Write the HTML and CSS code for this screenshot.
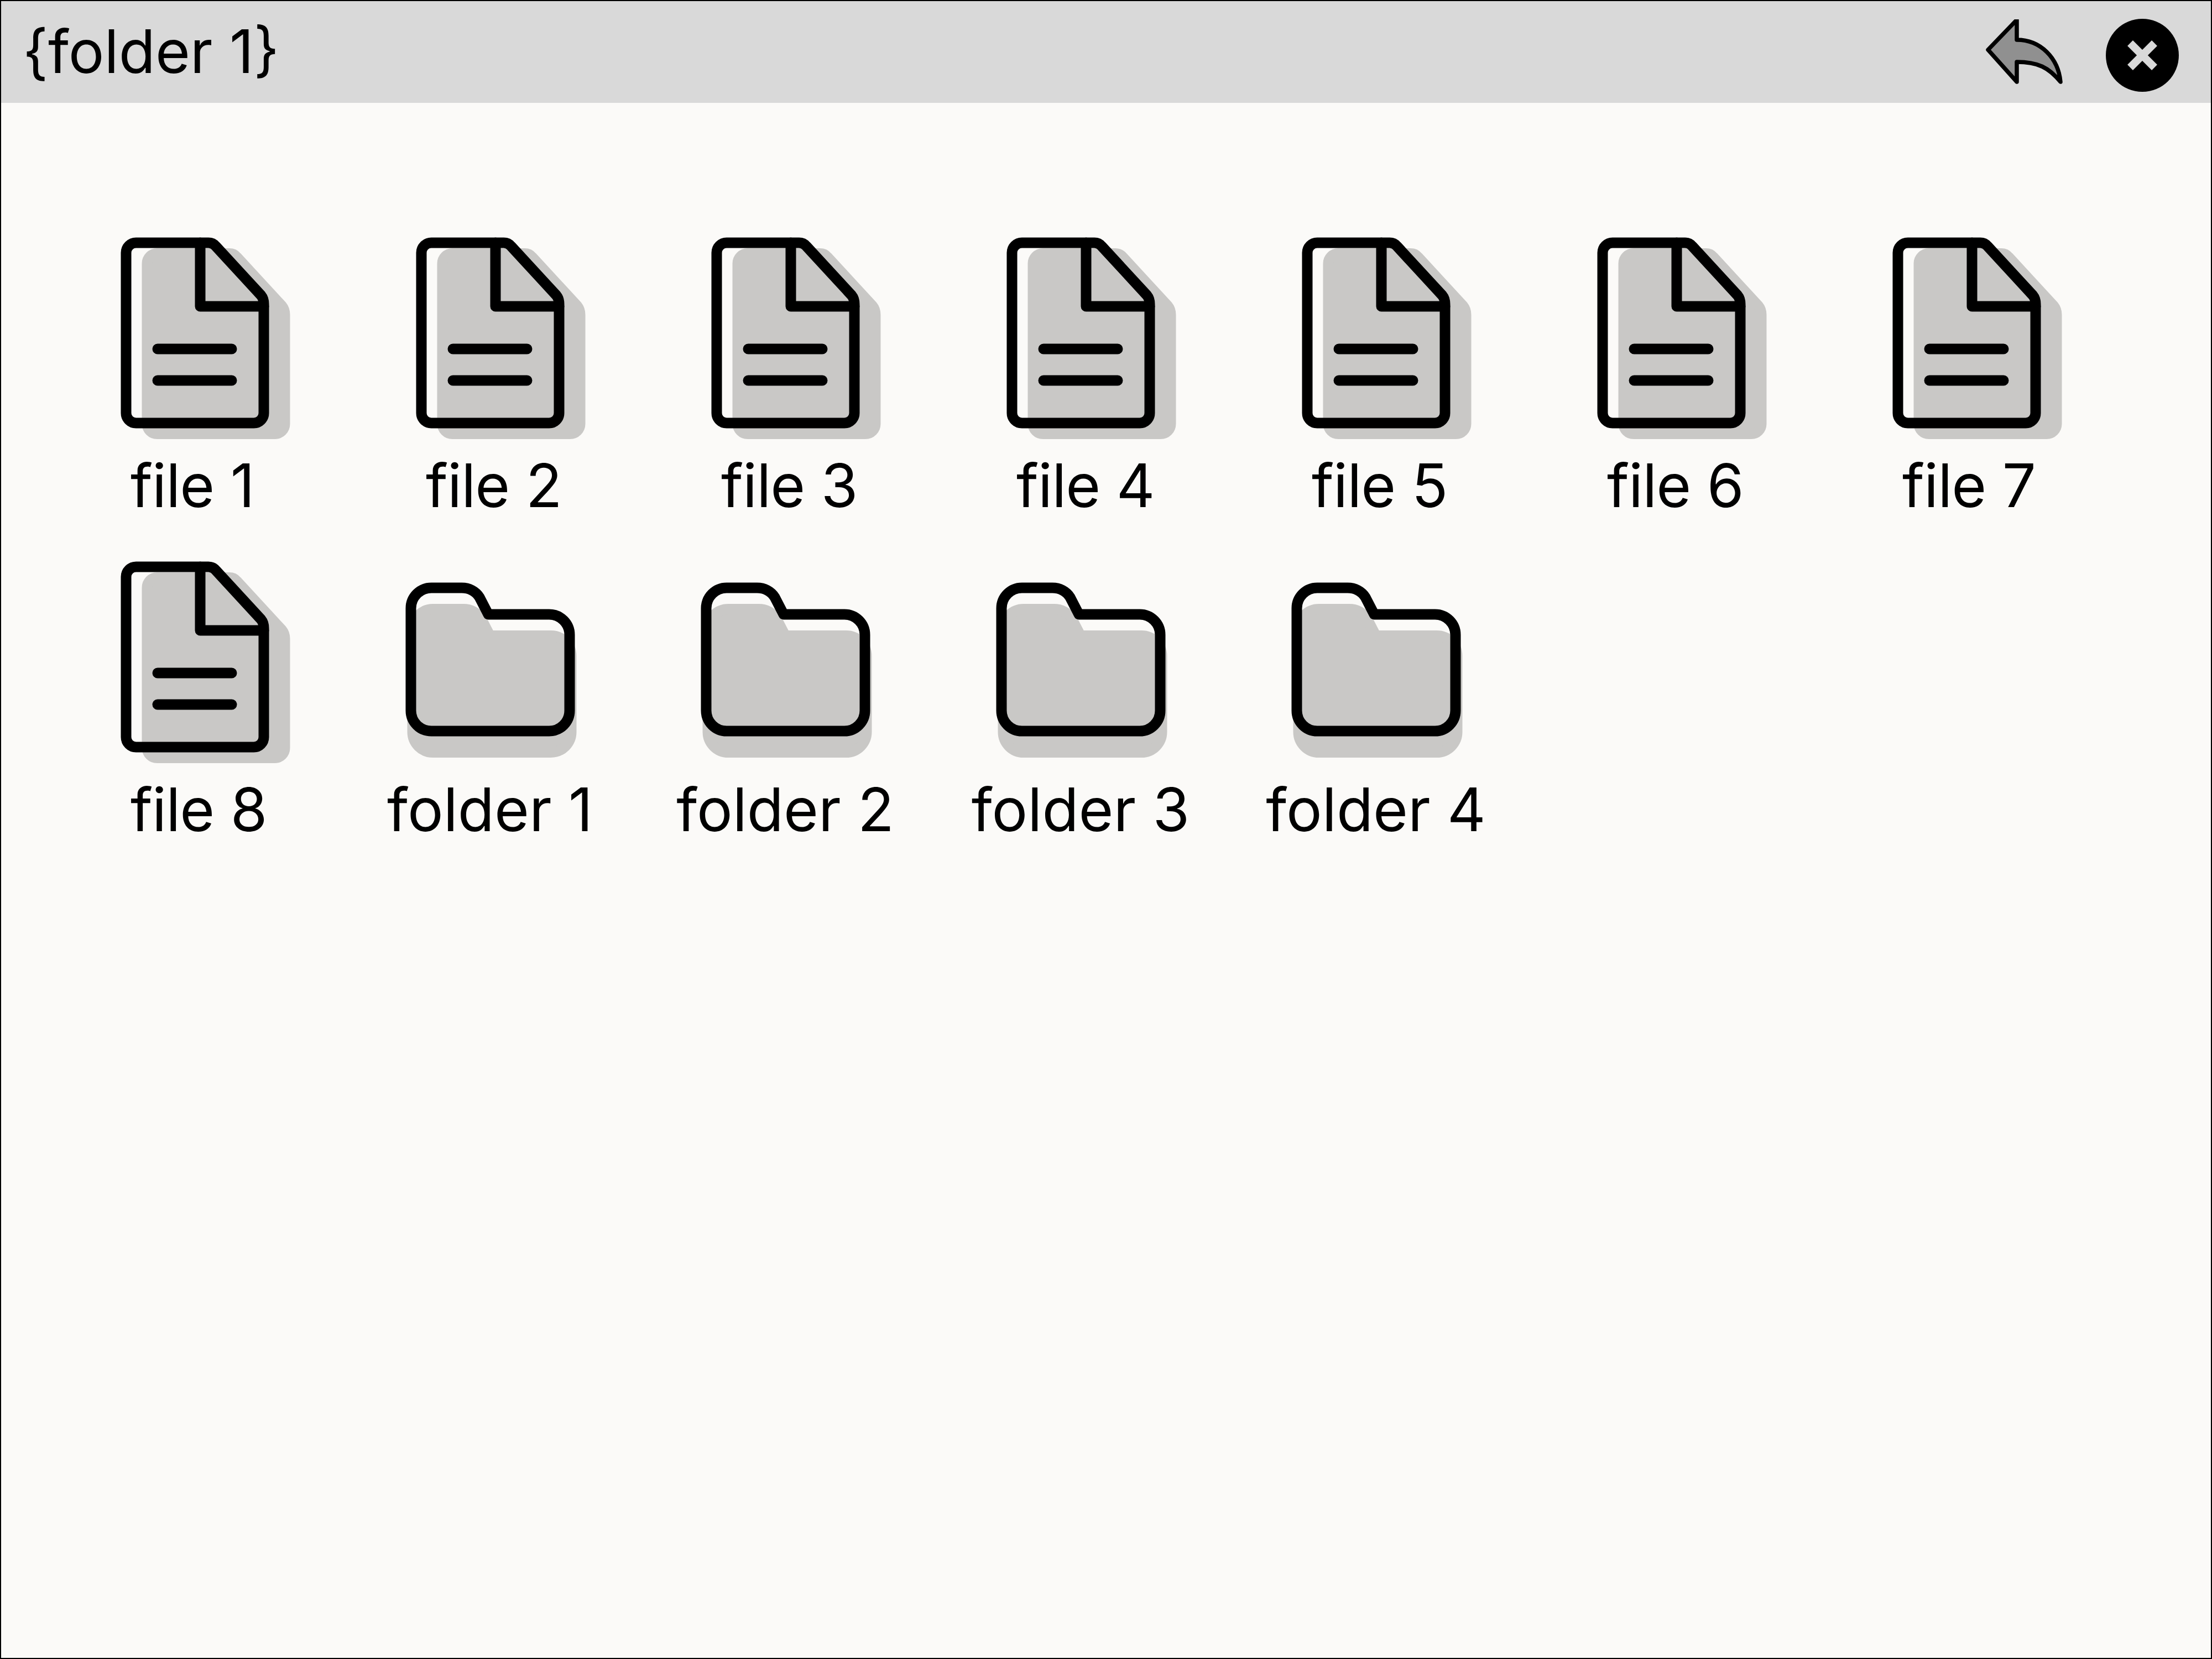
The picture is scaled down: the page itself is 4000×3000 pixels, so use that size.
FILE: index.html
```html
<!DOCTYPE html>
<html lang="en">
<head>
  <meta charset="UTF-8">
  <title>{folder 1}</title>
  <link rel="stylesheet" href="styles.css">
</head>
<body>
  <svg class="defs" width="0" height="0">
    <defs>
      <path id="file-outline" d="M56 37 A18 18 0 0 1 74 19 H205 Q213 19 218 25 L300 114 Q305 120 305 130 V327 A18 18 0 0 1 287 345 H74 A18 18 0 0 1 56 327 Z"/>
      <path id="folder-outline" d="M37 94 A37 37 0 0 1 74 57 H129 C142 57 154 63 161 74 L177 105 H287 A37 37 0 0 1 324 142 V279 A37 37 0 0 1 287 316 H74 A37 37 0 0 1 37 279 Z"/>
      <symbol id="file-icon" viewBox="0 0 360 380">
        <use href="#file-outline" class="shadow" transform="translate(38 19.5)"/>
        <use href="#file-outline" class="line"/>
        <path class="line" d="M190 19 V134 H305 M113 211 H247 M113 268 H247"/>
      </symbol>
      <symbol id="folder-icon" viewBox="0 0 360 380">
        <use href="#folder-outline" class="shadow" transform="translate(3 38.5)"/>
        <use href="#folder-outline" class="line"/>
      </symbol>
    </defs>
  </svg>

  <div class="window">
    <header class="titlebar">
      <h1 class="title">{folder 1}</h1>
      <svg class="back-btn" viewBox="0 0 150 124">
        <path d="M8 55 L60 1 V37 C103 37 135 70 139 113 C118 87 98 77 60 77 V113 Z"/>
      </svg>
      <svg class="close-btn" viewBox="0 0 132 132">
        <circle cx="66" cy="66" r="66"/>
        <path d="M44 44 L88 88 M88 44 L44 88"/>
      </svg>
    </header>

    <main class="items">
      <div class="item file"><svg class="icon"><use href="#file-icon"/></svg><span>file 1</span></div>
      <div class="item file"><svg class="icon"><use href="#file-icon"/></svg><span>file 2</span></div>
      <div class="item file"><svg class="icon"><use href="#file-icon"/></svg><span>file 3</span></div>
      <div class="item file"><svg class="icon"><use href="#file-icon"/></svg><span>file 4</span></div>
      <div class="item file"><svg class="icon"><use href="#file-icon"/></svg><span>file 5</span></div>
      <div class="item file"><svg class="icon"><use href="#file-icon"/></svg><span>file 6</span></div>
      <div class="item file"><svg class="icon"><use href="#file-icon"/></svg><span>file 7</span></div>
      <div class="item file"><svg class="icon"><use href="#file-icon"/></svg><span>file 8</span></div>
      <div class="item"><svg class="icon"><use href="#folder-icon"/></svg><span>folder 1</span></div>
      <div class="item"><svg class="icon"><use href="#folder-icon"/></svg><span>folder 2</span></div>
      <div class="item"><svg class="icon"><use href="#folder-icon"/></svg><span>folder 3</span></div>
      <div class="item"><svg class="icon"><use href="#folder-icon"/></svg><span>folder 4</span></div>
    </main>
  </div>
</body>
</html>
```

FILE: styles.css
```css
html, body {
  margin: 0;
  padding: 0;
}

body {
  font-family: Inter, "Liberation Sans", sans-serif;
  color: #000;
}

.defs {
  display: block;
  height: 0;
}

.window {
  box-sizing: border-box;
  width: 4000px;
  height: 3000px;
  border: 2px solid #000;
  background: #fbfaf8;
}

.titlebar {
  display: flex;
  align-items: flex-start;
  height: 184px;
  background: #d9d9d9;
}

.title {
  margin: 26px auto 0 39px;
  font-size: 108px;
  font-weight: 400;
  line-height: 130px;
}

.back-btn {
  width: 150px;
  height: 124px;
  margin-top: 33px;
  fill: #909090;
  stroke: #000;
  stroke-width: 7.5;
  stroke-linejoin: round;
}

.close-btn {
  width: 132px;
  height: 132px;
  margin: 32px 58px 0 71px;
}

.close-btn circle {
  fill: #000;
}

.close-btn path {
  fill: none;
  stroke: #d9d9d9;
  stroke-width: 14;
}

.items {
  display: grid;
  grid-template-columns: repeat(7, 534px);
  grid-auto-rows: 586px;
  padding: 234px 0 0 83px;
}

.item {
  display: flex;
  flex-direction: column;
  align-items: center;
  font-size: 108px;
  line-height: 130px;
  white-space: nowrap;
}

.file span {
  width: 232px;
  letter-spacing: -1px;
}

.icon {
  display: block;
  flex: none;
  width: 360px;
  height: 380px;
  margin-bottom: 13px;
}

.shadow {
  fill: #c9c8c6;
  stroke: #c9c8c6;
  stroke-width: 19;
  stroke-linejoin: round;
}

.line {
  fill: none;
  stroke: #000;
  stroke-width: 19;
  stroke-linecap: round;
  stroke-linejoin: round;
}
```
